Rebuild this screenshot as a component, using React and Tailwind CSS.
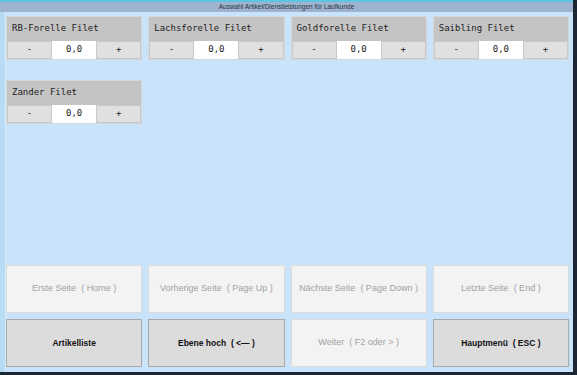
import React from "react";

const articles = ["RB-Forelle Filet", "Lachsforelle Filet", "Goldforelle Filet", "Saibling Filet", "Zander Filet"];

const navButtons = [
  { label: "Erste Seite  ( Home )", active: false },
  { label: "Vorherige Seite  ( Page Up )", active: false },
  { label: "Nächste Seite  ( Page Down )", active: false },
  { label: "Letzte Seite  ( End )", active: false },
  { label: "Artikelliste", active: true },
  { label: "Ebene hoch  ( <— )", active: true },
  { label: "Weiter  ( F2 oder > )", active: false },
  { label: "Hauptmenü  ( ESC )", active: true },
];

const ArticleTile = ({ name }) => (
  <div className="flex flex-col border border-[#d6d6d6] bg-[#c4c4c4]">
    <div className="h-[24px] flex items-center pl-[5px] text-[9px] text-[#222] font-['DejaVu_Sans_Mono',monospace]">
      {name}
    </div>
    <div className="h-[18px] grid grid-cols-[1fr_44px_1fr] text-[9px] font-['DejaVu_Sans_Mono',monospace] text-[#222]">
      <button className="bg-[#e0e0e0] border border-[#c8c8c8] flex items-center justify-center">-</button>
      <div className="bg-white flex items-center justify-center">0,0</div>
      <button className="bg-[#e0e0e0] border border-[#c8c8c8] flex items-center justify-center">+</button>
    </div>
  </div>
);

export default function App() {
  return (
    <div className="w-[577px] h-[375px] bg-[#1c2733] flex flex-col font-['Liberation_Sans',Arial,sans-serif]">
      <div className="flex-1 mr-[4px] mb-[3px] flex flex-col bg-[#b8dcf4]">
        <div className="h-[2px] bg-[#5cc6e2]" />
        <div className="h-[10px] bg-[#9db3cf] flex items-center justify-center text-[6.5px] text-[#2a3440] leading-none">
          Auswahl Artikel/Dienstleistungen für Laufkunde
        </div>
        <div className="flex-1 flex flex-col bg-[#c9e4fa] ml-[5px] border-l border-[#d6ecfb] pr-[4px] pt-[4px] pb-[5px]">
          <div className="grid grid-cols-4 gap-x-[6px] gap-y-[20px]">
            {articles.map((a) => (
              <ArticleTile key={a} name={a} />
            ))}
          </div>
          <div className="mt-auto grid grid-cols-4 gap-[6px]">
            {navButtons.map((b) => (
              <button
                key={b.label}
                className={
                  b.active
                    ? "h-[48px] bg-[#dcdcdc] border border-[#a9a9a9] text-[#111] text-[8.5px] font-bold whitespace-pre"
                    : "h-[48px] bg-[#f3f3f3] border border-[#dadada] text-[#a2a2a2] text-[9px] whitespace-pre"
                }
              >
                {b.label}
              </button>
            ))}
          </div>
        </div>
      </div>
    </div>
  );
}
